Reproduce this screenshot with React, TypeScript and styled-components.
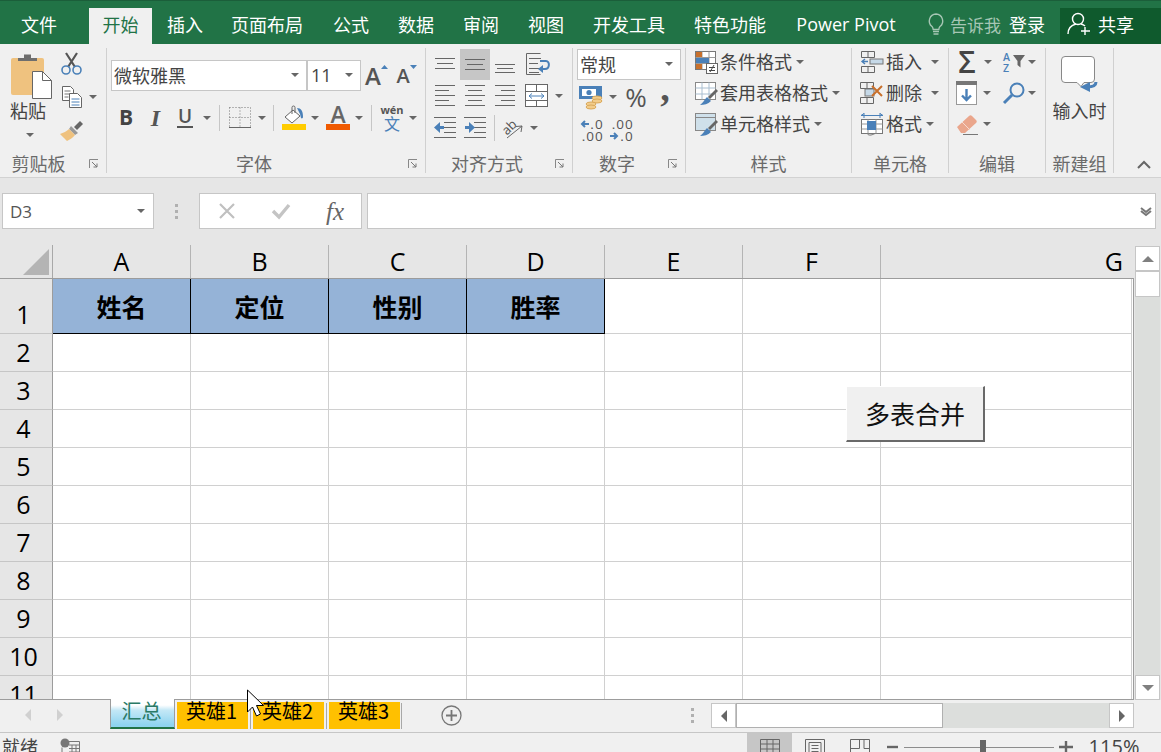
import React from "react";
import styled, { createGlobalStyle } from "styled-components";

const GRAY = "#666";
const BLUE = "#4a80b8";
const CJK = `"Noto Sans CJK SC", "Open Sans", sans-serif`;
const LATIN = `"Open Sans", "Noto Sans CJK SC", sans-serif`;

const Global = createGlobalStyle`
  html, body { margin: 0; padding: 0; width: 1161px; height: 752px; overflow: hidden; background: #f0f0f0; }
  * { box-sizing: border-box; }
  body { font-family: ${CJK}; color: #444; }
`;

const Page = styled.div`
  position: relative; width: 1161px; height: 752px; overflow: hidden;
  display: flex; flex-direction: column;
`;

/* ---------- title / tabs ---------- */
const TabBar = styled.div`
  height: 44px; flex: none; display: flex; align-items: flex-end;
  background: #217346; border-top: 1px solid #1b5e3a; color: #fff;
`;
const MenuTab = styled.div<{ $w: number; $active?: boolean; $ml?: number }>`
  width: ${(p) => p.$w}px; height: 36px; flex: none; margin-left: ${(p) => p.$ml ?? 0}px;
  display: flex; align-items: center; justify-content: center;
  font-size: 18px; line-height: 36px; padding-bottom: 4px; white-space: nowrap;
  background: ${(p) => (p.$active ? "#f0f0f0" : "transparent")};
  color: ${(p) => (p.$active ? "#217346" : "#fff")};
`;
const LatinTabText = styled.span`
  font-family: ${LATIN}; font-size: 18px;
`;
const TellArea = styled.div`
  height: 36px; flex: none; margin-left: 14px; display: flex; align-items: center; padding-bottom: 4px; gap: 6px;
`;
const TellText = styled.span`
  font-size: 17px; color: #a6c6b4; width: 52px; white-space: nowrap;
`;
const Login = styled.span`
  font-size: 18px; color: #fff; margin-left: 1px; width: 51px; white-space: nowrap;
`;
const Share = styled.div`
  flex: 1; height: 36px; background: #0f5a2d; display: flex; align-items: center; gap: 7px;
  padding: 0 0 4px 7px; font-size: 18px; color: #fff;
`;

/* ---------- ribbon ---------- */
const Ribbon = styled.div`
  height: 134px; flex: none; display: flex; padding: 4px 0; background: #f0f0f0;
  border-bottom: 1px solid #d2d2d2;
`;
const Group = styled.div<{ $w: number }>`
  width: ${(p) => p.$w}px; flex: none; display: flex; flex-direction: column;
  border-right: 1px solid #d0d0d0;
`;
const GroupBody = styled.div<{ $pt?: number }>`
  flex: 1; min-height: 0; padding-top: ${(p) => p.$pt ?? 1}px; display: flex; flex-direction: column;
`;
const LabelRow = styled.div`
  height: 22px; margin-bottom: -1px; display: flex; align-items: center; flex: none;
`;
const GroupLabel = styled.div<{ $pr?: number }>`
  flex: 1; text-align: center; font-size: 18px; line-height: 22px; color: #6a6a6a; padding-right: ${(p) => p.$pr ?? 0}px;
`;
const LauncherSlot = styled.div`
  width: 24px; flex: none; display: flex; justify-content: center; padding-top: 2px;
`;
const RRow = styled.div<{ $h?: number; $mt?: number; $pl?: number }>`
  height: ${(p) => p.$h ?? 31}px; flex: none; display: flex; align-items: center;
  margin-top: ${(p) => p.$mt ?? 0}px; padding-left: ${(p) => p.$pl ?? 0}px;
`;
const Slot = styled.div<{ $w: number; $active?: boolean }>`
  width: ${(p) => p.$w}px; height: 100%; flex: none; display: flex; align-items: center; justify-content: center;
  background: ${(p) => (p.$active ? "#c6c6c6" : "transparent")};
`;
const Caret = styled.i<{ $ml?: number }>`
  display: block; width: 0; height: 0; flex: none; margin-left: ${(p) => p.$ml ?? 0}px;
  border-left: 4px solid transparent; border-right: 4px solid transparent;
  border-top: 4px solid ${GRAY};
`;
const VSep = styled.div`
  width: 1px; height: 26px; background: #c6c6c6; flex: none;
`;
const SelectBox = styled.div<{ $w: number }>`
  width: ${(p) => p.$w}px; height: 31px; flex: none; background: #fff; border: 1px solid #c6c6c6;
  display: flex; align-items: center; justify-content: space-between; padding: 0 7px 2px 2px;
  font-size: 18px; color: #444; white-space: nowrap;
`;
const LatinValue = styled.span`
  font-family: ${LATIN}; font-size: 18px; margin-left: 1px;
`;
const GrowA = styled.span<{ $s: number }>`
  font-family: ${LATIN}; font-weight: 600; font-size: ${(p) => p.$s}px; color: #555; line-height: 1;
`;
const GrowTriWrap = styled.span`
  align-self: flex-start; margin: 5px 0 0 0; display: block;
`;
const FontBtn = styled.span`
  font-family: ${LATIN}; font-size: 21px; font-weight: 700; color: #444; line-height: 1;
`;
const ItalicBtn = styled.span`
  font-family: "Liberation Serif", serif; font-style: italic; font-size: 24px; font-weight: 700; color: #555; line-height: 1;
`;
const UnderBtn = styled.span`
  font-family: ${LATIN}; font-size: 19px; font-weight: 600; color: #555; line-height: 1; border-bottom: 2px solid #555; padding: 0 1px;
`;
const ColorStack = styled.div`
  display: flex; flex-direction: column; align-items: center; width: 24px;
`;
const ColorBar = styled.div<{ $c: string }>`
  width: 24px; height: 6px; background: ${(p) => p.$c}; flex: none;
`;
const ColorA = styled.span`
  font-family: ${LATIN}; font-weight: 600; font-size: 23px; color: #666; line-height: 18px; height: 19px;
`;
const WenStack = styled.div`
  display: flex; flex-direction: column; align-items: center; line-height: 1;
`;
const WenTop = styled.span`
  font-family: ${LATIN}; font-size: 11px; font-weight: 700; color: #555; line-height: 11px;
`;
const WenBottom = styled.span`
  font-size: 16px; color: ${BLUE}; line-height: 16px;
`;
const PercentText = styled.span`
  font-family: ${LATIN}; font-size: 26px; color: #555; line-height: 1;
`;
const CommaText = styled.span`
  font-family: "Liberation Serif", serif; font-size: 38px; font-weight: 700; color: #555; line-height: 1; margin-top: -17px;
`;
const DecStack = styled.div`
  display: flex; flex-direction: column; font-family: ${LATIN}; font-size: 13.5px; line-height: 12px; color: #555; letter-spacing: 1px; align-items: flex-end;
`;
const DecLine = styled.span`
  display: flex; align-items: center; gap: 1px;
`;
const Sigma = styled.span`
  font-family: ${LATIN}; font-size: 30px; font-weight: 600; color: #444; line-height: 1;
`;
const ListItemText = styled.span`
  font-size: 18px; color: #444; margin-left: 2px; white-space: nowrap; line-height: 24px; margin-bottom: 2px;
`;
const ColumnsBody = styled.div`
  flex: 1; min-height: 0; display: flex;
`;
const PasteCol = styled.div`
  width: 60px; flex: none; display: flex; flex-direction: column; align-items: flex-start; padding: 5px 0 0 11px;
`;
const PasteText = styled.span`
  font-size: 18px; color: #444; line-height: 22px; margin: 0 0 0 -1px;
`;
const PasteCaret = styled.div`
  margin: 12px 0 0 15px;
`;
const MiniCol = styled.div`
  flex: 1; display: flex; flex-direction: column;
`;
const NewBody = styled.div`
  flex: 1; display: flex; flex-direction: column; align-items: center; padding-top: 8px;
`;
const NewText = styled.span`
  font-size: 18px; color: #444; line-height: 22px; margin-top: 6px;
`;
const CollapseArea = styled.div`
  flex: 1; display: flex; align-items: flex-end; padding: 0 0 4px 23px;
`;

/* ---------- formula bar ---------- */
const FormulaBar = styled.div`
  height: 67px; flex: none; display: flex; background: #e6e6e6; padding: 15px 5px 16px 2px;
`;
const NameBox = styled.div`
  width: 152px; flex: none; background: #fff; border: 1px solid #c6c6c6; display: flex; align-items: center;
  justify-content: space-between; padding: 0 8px 0 7px; font-family: ${LATIN}; font-size: 17px; color: #555;
`;
const DotsSlot = styled.div`
  width: 45px; flex: none; display: flex; flex-direction: column; align-items: center; justify-content: center; gap: 3px;
`;
const Dot = styled.i`
  display: block; width: 3px; height: 3px; background: #b0b0b0;
`;
const FxBox = styled.div`
  width: 163px; flex: none; background: #fff; border: 1px solid #c6c6c6; display: flex; align-items: center; padding-left: 17px;
`;
const FxSlot = styled.div<{ $w: number }>`
  width: ${(p) => p.$w}px; flex: none; display: flex; justify-content: center;
`;
const FxText = styled.span`
  font-family: "Liberation Serif", serif; font-style: italic; font-weight: 400; font-size: 25px; color: #666; line-height: 1;
`;
const FormulaInput = styled.div`
  flex: 1; margin-left: 5px; background: #fff; border: 1px solid #c6c6c6; display: flex; align-items: center; justify-content: flex-end; padding-right: 3px;
`;

/* ---------- sheet ---------- */
const SheetArea = styled.div`
  height: 455px; flex: none; display: flex; background: #e6e6e6;
`;
const GridWrap = styled.div`
  position: relative; width: 1134px; flex: none; display: flex; flex-direction: column;
`;
const ColHeadRow = styled.div`
  height: 34px; flex: none; display: flex; border-bottom: 1px solid #9c9c9c;
`;
const Corner = styled.div`
  width: 53px; flex: none; border-right: 1px solid #a8a8a8; display: flex; align-items: flex-end; justify-content: flex-end; padding: 0 3px 3px 0;
`;
const ColHead = styled.div<{ $w: number; $last?: boolean }>`
  width: ${(p) => p.$w}px; flex: none; display: flex; align-items: center;
  justify-content: ${(p) => (p.$last ? "flex-end" : "center")}; padding-right: ${(p) => (p.$last ? 9 : 0)}px;
  border-right: 1px solid ${(p) => (p.$last ? "transparent" : "#b4b4b4")};
  font-family: ${LATIN}; font-size: 25px; line-height: 1; color: #000; padding-bottom: 1px;
`;
const GridBody = styled.div`
  flex: 1; min-height: 0; overflow: hidden; border-bottom: 1px solid #9c9c9c; border-right: 1px solid #9c9c9c; background: #fff;
`;
const SheetRow = styled.div<{ $h: number }>`
  height: ${(p) => p.$h}px; display: flex;
`;
const RowHead = styled.div<{ $first?: boolean }>`
  width: 53px; flex: none; background: #e6e6e6; border-right: 1px solid #9c9c9c; border-bottom: 1px solid #c6c6c6;
  display: flex; justify-content: center; align-items: ${(p) => (p.$first ? "flex-end" : "center")};
  font-family: ${LATIN}; font-size: 25px; line-height: 1; color: #000; padding: 0 5px ${(p) => (p.$first ? 6 : 1)}px 0;
`;
const Cell = styled.div<{ $w: number; $head?: boolean }>`
  width: ${(p) => p.$w}px; flex: none; display: flex; align-items: center; justify-content: center;
  background: ${(p) => (p.$head ? "#95b3d7" : "#fff")};
  border-right: 1px solid ${(p) => (p.$head ? "#000" : "#d0d0d0")};
  border-bottom: 1px solid ${(p) => (p.$head ? "#000" : "#d0d0d0")};
  font-size: 25px; font-weight: 700; color: #000; line-height: 1;
`;
const MergeButton = styled.div`
  position: absolute; left: 846px; top: 141px; width: 139px; height: 56px;
  background: #f0f0f0; border-right: 2px solid #696969; border-bottom: 2px solid #696969;
  border-top: 1px solid #fff; border-left: 1px solid #fff;
  display: flex; align-items: center; justify-content: center;
  font-size: 25px; color: #111; line-height: 1; padding-bottom: 1px;
`;
const VScroll = styled.div`
  flex: 1; display: flex; flex-direction: column; padding: 1px 1px 0 1px;
`;
const ScrollBtn = styled.div<{ $h?: number }>`
  height: ${(p) => p.$h ?? 25}px; flex: none; background: #fff; border: 1px solid #c6c6c6; display: flex; align-items: center; justify-content: center;
`;
const VTrack = styled.div`
  flex: 1; background: #dcdedc;
`;
const ArrowUp = styled.i`
  display: block; width: 0; height: 0; border-left: 6px solid transparent; border-right: 6px solid transparent; border-bottom: 6px solid #808080;
`;
const ArrowDown = styled.i`
  display: block; width: 0; height: 0; border-left: 6px solid transparent; border-right: 6px solid transparent; border-top: 6px solid #808080;
`;
const ArrowSide = styled.i<{ $right?: boolean; $c?: string }>`
  display: block; width: 0; height: 0; border-top: 6px solid transparent; border-bottom: 6px solid transparent;
  ${(p) => (p.$right ? `border-left: 6px solid ${p.$c ?? "#808080"};` : `border-right: 6px solid ${p.$c ?? "#808080"};`)}
`;

/* ---------- sheet tabs ---------- */
const TabStrip = styled.div`
  height: 32px; flex: none; display: flex; background: #f0f0f0; align-items: flex-start;
`;
const NavArea = styled.div`
  width: 110px; height: 32px; flex: none; display: flex; align-items: center; padding: 0 0 2px 25px; gap: 26px;
`;
const ActiveTab = styled.div`
  position: relative; width: 65px; height: 30px; margin-top: -1px; flex: none;
  background: linear-gradient(#fff 0, #fff 22%, #c4e8f6 40%, #8fd4f0 92%);
  border-left: 1px solid #9c9c9c; border-right: 1px solid #9c9c9c; border-bottom: 2px solid #217346;
  display: flex; align-items: center; justify-content: center; font-size: 20px; color: #2a7a66; line-height: 1; padding: 0 2px 5px 0;
`;
const SheetTab = styled.div<{ $w: number; $ml: number }>`
  width: ${(p) => p.$w}px; height: 27px; margin: 2px 0 0 ${(p) => p.$ml}px; flex: none; background: #ffc000;
  display: flex; align-items: center; justify-content: center; font-size: 20px; color: #000; line-height: 1; padding: 0 2px 9px 0;
`;
const TabSep = styled.div<{ $ml: number }>`
  width: 1px; height: 26px; margin: 3px 0 0 ${(p) => p.$ml}px; background: #a8a8a8; flex: none;
`;
const AddSheet = styled.div`
  margin: 5px 0 0 39px; width: 21px; flex: none;
`;
const HDots = styled.div`
  margin: 0 0 0 229px; width: 3px; height: 30px; flex: none; display: flex; flex-direction: column; justify-content: center; gap: 3px;
`;
const HScroll = styled.div`
  margin: 3px 0 0 17px; width: 423px; height: 25px; flex: none; display: flex; background: #dcdedc;
`;
const HBtn = styled.div`
  width: 25px; flex: none; background: #fff; border: 1px solid #c6c6c6; display: flex; align-items: center; justify-content: center;
`;
const HThumb = styled.div`
  width: 207px; flex: none; background: #fff; border: 1px solid #b0b0b0;
`;
const HTrack = styled.div`
  flex: 1;
`;

/* ---------- status bar ---------- */
const StatusBar = styled.div`
  flex: 1; min-height: 0; display: flex; justify-content: space-between; background: #f0f0f0; border-top: 1px solid #c6c6c6; overflow: hidden;
`;
const StatusLeft = styled.div`
  display: flex; align-items: flex-start; padding: 1px 0 0 2px; gap: 22px;
`;
const StatusText = styled.span`
  font-size: 18px; line-height: 24px; color: #444; width: 36px;
`;
const MacroSlot = styled.div`
  padding-top: 4px;
`;
const StatusRight = styled.div`
  width: 414px; flex: none; display: flex; align-items: stretch;
`;
const ViewBtn = styled.div<{ $active?: boolean }>`
  width: 45px; flex: none; display: flex; justify-content: center; padding-top: 6px;
  background: ${(p) => (p.$active ? "#c6c6c6" : "transparent")};
`;
const ZoomSlot = styled.div<{ $w: number }>`
  width: ${(p) => p.$w}px; flex: none; display: flex; justify-content: center; padding-top: 8px;
`;
const ZoomTrack = styled.div`
  position: relative; width: 150px; flex: none;
  &::before { content: ""; position: absolute; left: 0; right: 0; top: 14px; height: 1px; background: #8c8c8c; }
`;
const ZoomThumb = styled.div`
  position: absolute; left: 76px; top: 7px; width: 6px; height: 14px; background: #666;
`;
const ZoomText = styled.div`
  width: 72px; flex: none; text-align: center; font-family: ${LATIN}; font-size: 20px; line-height: 28px; color: #444;
`;
const CursorBox = styled.div`
  position: absolute; left: 246px; top: 689px; width: 20px; height: 30px; pointer-events: none;
`;

/* ---------- icons ---------- */
type SvgProps = { children: React.ReactNode; w: number; h: number };
const Ico = ({ w, h, children }: SvgProps) => (
  <svg width={w} height={h} viewBox={`0 0 ${w} ${h}`} fill="none" style={{ display: "block", flex: "none", overflow: "visible" }}>
    {children}
  </svg>
);

const Launcher = () => (
  <Ico w={10} h={10}>
    <path d="M.5 9V.5H9" stroke="#888" />
    <path d="M3 3l5 5M8 4.500V8H4.500" stroke="#777" />
  </Ico>
);
const PasteIcon = () => (
  <Ico w={42} h={46}>
    <rect x="0" y="5" width="33" height="37" rx="2" fill="#efc27f" />
    <path d="M7 8V5h6V1.500h7V5h6v3z" fill="#6e6e6e" />
    <path d="M21.500 18.500h10l9 9v18h-19z" fill="#fff" stroke="#666" />
    <path d="M31.500 18.500v9h9" stroke="#666" />
  </Ico>
);
const Scissors = () => (
  <Ico w={21} h={23}>
    <path d="M5 1l9 14M16 1L7 15" stroke="#555" strokeWidth="2.2" />
    <circle cx="5" cy="18" r="4" stroke={BLUE} strokeWidth="1.6" />
    <circle cx="16" cy="18" r="4" stroke={BLUE} strokeWidth="1.6" />
  </Ico>
);
const CopyIcon = () => (
  <Ico w={20} h={22}>
    <path d="M.5.5h8l3 3v11h-11z" fill="#fff" stroke="#666" />
    <path d="M2.500 5h6M2.500 8h6M2.500 11h4" stroke="#777" />
    <path d="M7.500 7.500h8l4 4v10h-12z" fill="#fff" stroke="#666" />
    <path d="M9.500 13h8M9.500 16h8M9.500 19h8" stroke={BLUE} />
  </Ico>
);
const BrushIcon = () => (
  <Ico w={24} h={21}>
    <path d="M14 7l6-6 3 3-6 6z" fill="#666" />
    <path d="M11 6l7 7-3 2-6-6z" fill="#999" />
    <path d="M9 9l6 6c-2 3-6 5-8 6l-7-7c3-1 7-3 9-5z" fill="#efc27f" />
  </Ico>
);
const GrowTri = ({ up }: { up?: boolean }) => (
  <Ico w={7} h={4}>
    <path d={up ? "M0 4l3.500-4L7 4z" : "M0 0l3.500 4L7 0z"} fill={BLUE} />
  </Ico>
);
const BorderIcon = () => (
  <Ico w={22} h={21}>
    <path d="M.5.5h21M.5.5v20M21.500.5v20M11 .5v20M.5 10.500h21" stroke="#777" strokeDasharray="1 2" />
    <path d="M0 20.500h22" stroke="#666" />
  </Ico>
);
const BucketIcon = () => (
  <Ico w={24} h={19}>
    <path d="M11 5L3 12l7 6 8-7z" fill="#fff" stroke="#666" />
    <path d="M10 9V2.500a1.500 1.500 0 0 1 3 0V8" stroke="#666" />
    <path d="M15 3c4 0 6 3 6 9 0 1-1 2-2 1l-1-4z" fill={BLUE} />
  </Ico>
);
const Lines = ({ w, h, l, c = "#666" }: { w: number; h: number; l: [number, number, number][]; c?: string }) => (
  <Ico w={w} h={h}>
    {l.map(([a, b, y], i) => (
      <path key={i} d={`M${a} ${y}.5H${b}`} stroke={c} />
    ))}
  </Ico>
);
const WrapIcon = () => (
  <Ico w={24} h={23}>
    <path d="M.5.5h14M.5.5v21h14" stroke="#666" />
    <path d="M3 5.500h12M3 10.500h9M3 15.500h10M3 19.500h10" stroke="#666" />
    <path d="M14 8h6c4 0 4 8-1 8h-4" stroke={BLUE} strokeWidth="2" />
    <path d="M17 12l-5 4 5 4z" fill={BLUE} />
  </Ico>
);
const MergeIcon = () => (
  <Ico w={24} h={24}>
    <rect x=".5" y=".5" width="22" height="22" fill="#fff" stroke="#666" />
    <path d="M.5 7.500h22M.5 16.500h22M11.500 .5v7M11.500 16.500v6" stroke="#666" />
    <path d="M4 12h15M4 12l3-2.500M4 12l3 2.500M19 12l-3-2.500M19 12l-3 2.500" stroke={BLUE} />
  </Ico>
);
const IndentIcon = ({ right }: { right?: boolean }) => (
  <Ico w={23} h={22}>
    <path d="M0 .5h22M10 5.500h12M10 10.500h12M10 15.500h12M0 20.500h22" stroke="#666" />
    {right ? (
      <path d="M1 9h4V5l6 5.500-6 5.500v-4H1z" fill={BLUE} />
    ) : (
      <path d="M10 9H6V5L0 10.500 6 16v-4h4z" fill={BLUE} />
    )}
  </Ico>
);
const OrientIcon = () => (
  <Ico w={22} h={22}>
    <text x="1" y="15" fontFamily="Open Sans, sans-serif" fontSize="13" fill="#555" transform="rotate(-45 8 11)">ab</text>
    <path d="M6 21L21 9M21 9l-6 .5M21 9l-1 6" stroke="#666" />
  </Ico>
);
const MoneyIcon = () => (
  <Ico w={24} h={24}>
    <rect x="0" y="1" width="23" height="13" fill={BLUE} />
    <rect x="3" y="4" width="14" height="7" fill="#fff" />
    <circle cx="10" cy="7.500" r="2.600" fill={BLUE} />
    <ellipse cx="18" cy="13" rx="5" ry="2" fill="#f2cc8a" stroke="#d9a85a" />
    <ellipse cx="18" cy="16" rx="5" ry="2" fill="#f2cc8a" stroke="#d9a85a" />
    <ellipse cx="12" cy="19" rx="5" ry="2" fill="#f2cc8a" stroke="#d9a85a" />
    <ellipse cx="12" cy="22" rx="5" ry="2" fill="#f2cc8a" stroke="#d9a85a" />
  </Ico>
);
const DecArrow = ({ right }: { right?: boolean }) => (
  <Ico w={9} h={8}>
    {right ? (
      <path d="M0 4h7M4 1l3 3-3 3" stroke={BLUE} strokeWidth="2" />
    ) : (
      <path d="M9 4H2M5 1L2 4l3 3" stroke={BLUE} strokeWidth="2" />
    )}
  </Ico>
);
const CondIcon = () => (
  <Ico w={23} h={23}>
    <rect x=".5" y=".5" width="20" height="18" fill="#fff" stroke="#777" />
    <path d="M7 .5v18M14 .5v18M.5 6.500h20M.5 12.500h20" stroke="#999" />
    <rect x="1" y="1" width="6" height="5" fill="#c8702c" />
    <rect x="1" y="7" width="13" height="5" fill={BLUE} />
    <rect x="1" y="13" width="6" height="5" fill="#c8702c" />
    <rect x="11.500" y="12.500" width="11" height="10" fill="#fff" stroke="#666" />
    <path d="M14 16.500h6M14 19.500h6M19 14l-4 7" stroke="#444" />
  </Ico>
);
const TableBrushIcon = ({ fill }: { fill?: boolean }) => (
  <Ico w={23} h={23}>
    <rect x=".5" y=".5" width="20" height="17" fill={fill ? "#cfe0ea" : "#fff"} stroke="#888" />
    {fill ? (
      <path d="M.5 4.500h20" stroke="#888" />
    ) : (
      <path d="M7 .5v17M14 .5v17M.5 6h20M.5 12h20" stroke="#a9bed0" />
    )}
    <path d="M13 15l8-8 2 2-8 8z" fill="#666" />
    <path d="M12 15l4 4c-3 3-7 4-11 4 3-2 4-5 7-8z" fill={BLUE} />
  </Ico>
);
const CellInsertIcon = () => (
  <Ico w={23} h={22}>
    <path d="M.5 .5h13v6H.5zM.5 15.500h13v6H.5zM7 .5v6M7 15.500v6" stroke="#666" />
    <rect x="9" y="8" width="13" height="5" fill="#c6d9e8" stroke="#777" />
    <path d="M7 10.500H1M4 8l-3 2.500L4 13" stroke={BLUE} strokeWidth="1.4" />
  </Ico>
);
const CellDeleteIcon = () => (
  <Ico w={24} h={22}>
    <path d="M.5 .5h13v6H.5zM.5 15.500h13v6H.5zM7 .5v6M7 15.500v6" stroke="#666" />
    <rect x="5" y="7" width="9" height="7" fill="#c6d9e8" stroke="#777" />
    <path d="M12 4l10 10M22 4L12 14" stroke="#c8702c" strokeWidth="2" />
  </Ico>
);
const CellFormatIcon = () => (
  <Ico w={23} h={24}>
    <path d="M0 3.500h22M3 1v5M19 1v5M0 3.500l3-2M22 3.500l-3-2" stroke={BLUE} />
    <rect x=".5" y="7.500" width="21" height="14" fill="#fff" stroke="#777" />
    <path d="M7 7.500v14M15 7.500v14M.5 12h21M.5 17h21" stroke="#999" />
    <rect x="6" y="9" width="9" height="9" fill={BLUE} />
    <path d="M6 21.500c2 3 6 1 8 0" stroke="#777" />
  </Ico>
);
const SortIcon = () => (
  <Ico w={22} h={21}>
    <text x="0" y="9" fontFamily="Open Sans, sans-serif" fontSize="10.5" fontWeight="600" fill={BLUE}>A</text>
    <text x="0" y="20" fontFamily="Open Sans, sans-serif" fontSize="10.5" fontWeight="600" fill={BLUE}>Z</text>
    <path d="M10 3h12l-4.500 6v6.500L14.500 13V9z" fill="#666" />
  </Ico>
);
const FillIcon = () => (
  <Ico w={22} h={24}>
    <rect x=".5" y=".5" width="20" height="23" fill="#fff" stroke="#999" />
    <rect x="0" y="0" width="21" height="4" fill="#777" />
    <path d="M10.500 8v11M6 14.500l4.500 4.500 4.500-4.500" stroke={BLUE} strokeWidth="2.4" />
  </Ico>
);
const FindIcon = () => (
  <Ico w={23} h={22}>
    <circle cx="14" cy="8" r="6.500" stroke={BLUE} strokeWidth="2" />
    <path d="M9 13l-8 8" stroke={BLUE} strokeWidth="3" />
  </Ico>
);
const EraserIcon = () => (
  <Ico w={22} h={21}>
    <path d="M1 13L13 2c1-1 2-1 3 0l4 4c1 1 1 2 0 3L9 19H5z" fill="#eaa68c" />
    <path d="M6 8l8 8" stroke="#f7d9ce" />
    <path d="M7 20.500h15" stroke="#777" />
  </Ico>
);
const BubbleIcon = () => (
  <Ico w={38} h={37}>
    <path d="M4 .5h26a3.500 3.500 0 0 1 3.500 3.500v19a3.500 3.500 0 0 1-3.500 3.500h-7l-3 4-4-4H4A3.500 3.500 0 0 1 .5 23V4A3.500 3.500 0 0 1 4 .5z" fill="#fff" stroke="#888" />
    <path d="M35 26c0 4-4 5-9 5" stroke={BLUE} strokeWidth="3" />
    <path d="M29 26l-10 5 10 5z" fill={BLUE} />
  </Ico>
);
const Chevron = () => (
  <Ico w={14} h={9}>
    <path d="M1 8l6-6 6 6" stroke="#666" strokeWidth="2" />
  </Ico>
);
const Bulb = () => (
  <Ico w={16} h={23}>
    <path d="M8 1a7 7 0 0 0-4 12.500c1 1 1 2 1.200 3h5.600c.2-1 .2-2 1.200-3A7 7 0 0 0 8 1z" stroke="#a6c6b4" strokeWidth="1.4" />
    <path d="M5 18.500h6M5.500 21h5" stroke="#a6c6b4" strokeWidth="1.6" />
  </Ico>
);
const UserPlus = () => (
  <Ico w={24} h={24}>
    <circle cx="11" cy="7" r="5.500" stroke="#fff" strokeWidth="1.4" />
    <path d="M1 22c0-6 4-9 8-10M14 12c2 .5 3 1 4 2" stroke="#fff" strokeWidth="1.4" />
    <path d="M18 15v8M14 19h9" stroke="#fff" strokeWidth="1.4" />
  </Ico>
);
const XIcon = () => (
  <Ico w={18} h={16}>
    <path d="M2 1l14 14M16 1L2 15" stroke="#c0c0c0" strokeWidth="2.2" />
  </Ico>
);
const CheckIcon = () => (
  <Ico w={20} h={16}>
    <path d="M2 8l6 6L18 2" stroke="#c4c4c4" strokeWidth="3.4" />
  </Ico>
);
const DoubleDown = () => (
  <Ico w={12} h={9}>
    <path d="M1 1l5 4 5-4M1 4l5 4 5-4" stroke="#777" strokeWidth="2" />
  </Ico>
);
const CornerTri = () => (
  <Ico w={26} h={26}>
    <path d="M26 0v26H0z" fill="#b4b4b4" />
  </Ico>
);
const AddCircle = () => (
  <Ico w={21} h={21}>
    <circle cx="10.500" cy="10.500" r="9.500" stroke="#777" strokeWidth="1.3" />
    <path d="M10.500 5v11M5 10.500h11" stroke="#777" strokeWidth="1.8" />
  </Ico>
);
const MacroIcon = () => (
  <Ico w={20} h={16}>
    <circle cx="5" cy="5" r="4.500" fill="#777" />
    <path d="M6 3.500h13.500v13M2 9.500v7M9 7h10M9 10.500h10M9 14h10M12 7v9M16 7v9" stroke="#777" />
  </Ico>
);
const NormalView = () => (
  <Ico w={20} h={14}>
    <path d="M.5.5h19v14M.5.5v14M.5 5h19M.5 10h19M7 .5v14M13 .5v14" stroke="#666" />
  </Ico>
);
const PageView = () => (
  <Ico w={20} h={14}>
    <path d="M.5 14V.5h19V14M4 14V3.500h12V14M6.500 6.500h7M6.500 9.500h7M6.500 12.500h7" stroke="#666" />
  </Ico>
);
const BreakView = () => (
  <Ico w={20} h={14}>
    <path d="M.5 14V.5h19V14M.5 9.500h9M9.500.5v9M14 .5v9h5.500" stroke="#666" />
  </Ico>
);
const MinusIcon = () => (
  <Ico w={12} h={12}>
    <path d="M0 6h11" stroke="#666" strokeWidth="2.4" />
  </Ico>
);
const PlusIcon = () => (
  <Ico w={14} h={12}>
    <path d="M0 6h14M7 0v13" stroke="#666" strokeWidth="2.4" />
  </Ico>
);
const Cursor = () => (
  <Ico w={20} h={30}>
    <path d="M1.500 1v22l5-5 4 9 4-2-4-8.500h7z" fill="#fff" stroke="#000" strokeWidth="1" />
  </Ico>
);

/* ---------- data ---------- */
const MENU: [string, number][] = [
  ["文件", 78],
  ["开始", 63],
  ["插入", 66],
  ["页面布局", 98],
  ["公式", 70],
  ["数据", 60],
  ["审阅", 70],
  ["视图", 60],
  ["开发工具", 106],
  ["特色功能", 96],
];
const COLS: [string, number][] = [
  ["A", 138],
  ["B", 138],
  ["C", 138],
  ["D", 138],
  ["E", 138],
  ["F", 138],
  ["G", 252],
];
const HEADS = ["姓名", "定位", "性别", "胜率", "", "", ""];
const ROWS = [2, 3, 4, 5, 6, 7, 8, 9, 10, 11];

const lines3 = (a: number, b: number, y: number, gap: number): [number, number, number][] => [
  [a, b, y],
  [a + 2, b - 2, y + gap],
  [a, b, y + gap * 2],
];

export default function App() {
  return (
    <Page>
      <Global />
      <TabBar>
        {MENU.map(([t, w], i) => (
          <MenuTab key={t} $w={w} $active={i === 1} $ml={i === 1 ? 11 : 0}>
            {t}
          </MenuTab>
        ))}
        <MenuTab $w={136}>
          <LatinTabText>Power Pivot</LatinTabText>
        </MenuTab>
        <TellArea>
          <Bulb />
          <TellText>告诉我</TellText>
          <Login>登录</Login>
        </TellArea>
        <Share>
          <UserPlus />
          共享
        </Share>
      </TabBar>

      <Ribbon>
        <Group $w={107}>
          <ColumnsBody>
            <PasteCol>
              <PasteIcon />
              <PasteText>粘贴</PasteText>
              <PasteCaret>
                <Caret />
              </PasteCaret>
            </PasteCol>
            <MiniCol>
              <RRow $h={31}>
                <Slot $w={22}><Scissors /></Slot>
              </RRow>
              <RRow $h={36}>
                <Slot $w={24}><CopyIcon /></Slot>
                <Slot $w={18}><Caret /></Slot>
              </RRow>
              <RRow $h={31}>
                <Slot $w={24}><BrushIcon /></Slot>
              </RRow>
            </MiniCol>
          </ColumnsBody>
          <LabelRow>
            <GroupLabel $pr={5}>剪贴板</GroupLabel>
            <LauncherSlot><Launcher /></LauncherSlot>
          </LabelRow>
        </Group>

        <Group $w={319}>
          <GroupBody $pt={12}>
            <RRow $pl={4}>
              <SelectBox $w={196}>
                微软雅黑
                <Caret />
              </SelectBox>
              <SelectBox $w={54}>
                <LatinValue>11</LatinValue>
                <Caret />
              </SelectBox>
              <Slot $w={31}>
                <GrowA $s={24}>A</GrowA>
                <GrowTriWrap><GrowTri up /></GrowTriWrap>
              </Slot>
              <Slot $w={29}>
                <GrowA $s={20}>A</GrowA>
                <GrowTriWrap><GrowTri /></GrowTriWrap>
              </Slot>
            </RRow>
            <RRow $mt={11} $pl={4}>
              <Slot $w={30}><FontBtn>B</FontBtn></Slot>
              <Slot $w={29}><ItalicBtn>I</ItalicBtn></Slot>
              <Slot $w={30}><UnderBtn>U</UnderBtn></Slot>
              <Slot $w={14}><Caret /></Slot>
              <Slot $w={5} />
              <VSep />
              <Slot $w={2} />
              <Slot $w={35}><BorderIcon /></Slot>
              <Slot $w={10}><Caret /></Slot>
              <Slot $w={6} />
              <VSep />
              <Slot $w={4} />
              <Slot $w={32}>
                <ColorStack>
                  <BucketIcon />
                  <ColorBar $c="#ffcc00" />
                </ColorStack>
              </Slot>
              <Slot $w={10}><Caret /></Slot>
              <Slot $w={2} />
              <Slot $w={32}>
                <ColorStack>
                  <ColorA>A</ColorA>
                  <ColorBar $c="#f05a00" />
                </ColorStack>
              </Slot>
              <Slot $w={10}><Caret /></Slot>
              <Slot $w={7} />
              <VSep />
              <Slot $w={4} />
              <Slot $w={32}>
                <WenStack>
                  <WenTop>wén</WenTop>
                  <WenBottom>文</WenBottom>
                </WenStack>
              </Slot>
              <Slot $w={10}><Caret /></Slot>
            </RRow>
          </GroupBody>
          <LabelRow>
            <GroupLabel>字体</GroupLabel>
            <LauncherSlot><Launcher /></LauncherSlot>
          </LabelRow>
        </Group>

        <Group $w={147}>
          <GroupBody>
            <RRow $pl={4}>
              <Slot $w={30}><Lines w={20} h={15} l={lines3(0, 20, 1, 5)} /></Slot>
              <Slot $w={30} $active><Lines w={20} h={15} l={lines3(0, 20, 2, 5)} /></Slot>
              <Slot $w={30}><Lines w={20} h={21} l={lines3(0, 20, 10, 4)} /></Slot>
              <Slot $w={36}><WrapIcon /></Slot>
            </RRow>
            <RRow $pl={4}>
              <Slot $w={30}>
                <Lines w={20} h={21} l={[[0, 20, 0], [0, 14, 5], [0, 20, 10], [0, 14, 15], [0, 20, 20]]} />
              </Slot>
              <Slot $w={30}>
                <Lines w={20} h={21} l={[[0, 20, 0], [3, 17, 5], [0, 20, 10], [3, 17, 15], [0, 20, 20]]} />
              </Slot>
              <Slot $w={30}>
                <Lines w={20} h={21} l={[[0, 20, 0], [6, 20, 5], [0, 20, 10], [6, 20, 15], [0, 20, 20]]} />
              </Slot>
              <Slot $w={34}><MergeIcon /></Slot>
              <Slot $w={10}><Caret /></Slot>
            </RRow>
            <RRow $pl={4} $mt={1}>
              <Slot $w={30}><IndentIcon /></Slot>
              <Slot $w={30}><IndentIcon right /></Slot>
              <Slot $w={4} />
              <VSep />
              <Slot $w={34}><OrientIcon /></Slot>
              <Slot $w={10}><Caret /></Slot>
            </RRow>
          </GroupBody>
          <LabelRow>
            <GroupLabel>对齐方式</GroupLabel>
            <LauncherSlot><Launcher /></LauncherSlot>
          </LabelRow>
        </Group>

        <Group $w={113}>
          <GroupBody>
            <RRow $pl={4}>
              <SelectBox $w={104}>
                常规
                <Caret />
              </SelectBox>
            </RRow>
            <RRow $pl={2} $mt={1}>
              <Slot $w={32}><MoneyIcon /></Slot>
              <Slot $w={12}><Caret /></Slot>
              <Slot $w={34}><PercentText>%</PercentText></Slot>
              <Slot $w={24}><CommaText>,</CommaText></Slot>
            </RRow>
            <RRow $pl={4} $mt={2}>
              <Slot $w={30}>
                <DecStack>
                  <DecLine><DecArrow />.0</DecLine>
                  <DecLine>.00</DecLine>
                </DecStack>
              </Slot>
              <Slot $w={30}>
                <DecStack>
                  <DecLine>.00</DecLine>
                  <DecLine><DecArrow right />.0</DecLine>
                </DecStack>
              </Slot>
            </RRow>
          </GroupBody>
          <LabelRow>
            <GroupLabel>数字</GroupLabel>
            <LauncherSlot><Launcher /></LauncherSlot>
          </LabelRow>
        </Group>

        <Group $w={166}>
          <GroupBody $pt={0}>
            <RRow $pl={8} $h={28}>
              <Slot $w={24}><CondIcon /></Slot>
              <ListItemText>条件格式</ListItemText>
              <Caret $ml={4} />
            </RRow>
            <RRow $pl={8} $h={34}>
              <Slot $w={24}><TableBrushIcon /></Slot>
              <ListItemText>套用表格格式</ListItemText>
              <Caret $ml={4} />
            </RRow>
            <RRow $pl={8} $h={28}>
              <Slot $w={24}><TableBrushIcon fill /></Slot>
              <ListItemText>单元格样式</ListItemText>
              <Caret $ml={4} />
            </RRow>
          </GroupBody>
          <LabelRow><GroupLabel>样式</GroupLabel></LabelRow>
        </Group>

        <Group $w={97}>
          <GroupBody $pt={0}>
            <RRow $pl={8} $h={28}>
              <Slot $w={24}><CellInsertIcon /></Slot>
              <ListItemText>插入</ListItemText>
              <Caret $ml={9} />
            </RRow>
            <RRow $pl={8} $h={34}>
              <Slot $w={24}><CellDeleteIcon /></Slot>
              <ListItemText>删除</ListItemText>
              <Caret $ml={9} />
            </RRow>
            <RRow $pl={8} $h={28}>
              <Slot $w={24}><CellFormatIcon /></Slot>
              <ListItemText>格式</ListItemText>
              <Caret $ml={4} />
            </RRow>
          </GroupBody>
          <LabelRow><GroupLabel>单元格</GroupLabel></LabelRow>
        </Group>

        <Group $w={97}>
          <GroupBody $pt={0}>
            <RRow $pl={4} $h={28}>
              <Slot $w={28}><Sigma>Σ</Sigma></Slot>
              <Slot $w={14}><Caret /></Slot>
              <Slot $w={7} />
              <Slot $w={24}><SortIcon /></Slot>
              <Slot $w={12}><Caret /></Slot>
            </RRow>
            <RRow $pl={4} $h={34}>
              <Slot $w={28}><FillIcon /></Slot>
              <Slot $w={12}><Caret /></Slot>
              <Slot $w={9} />
              <Slot $w={24}><FindIcon /></Slot>
              <Slot $w={12}><Caret /></Slot>
            </RRow>
            <RRow $pl={4} $h={28}>
              <Slot $w={28}><EraserIcon /></Slot>
              <Slot $w={12}><Caret /></Slot>
            </RRow>
          </GroupBody>
          <LabelRow><GroupLabel>编辑</GroupLabel></LabelRow>
        </Group>

        <Group $w={68}>
          <NewBody>
            <BubbleIcon />
            <NewText>输入时</NewText>
          </NewBody>
          <LabelRow><GroupLabel>新建组</GroupLabel></LabelRow>
        </Group>

        <CollapseArea><Chevron /></CollapseArea>
      </Ribbon>

      <FormulaBar>
        <NameBox>
          D3
          <Caret />
        </NameBox>
        <DotsSlot>
          <Dot />
          <Dot />
          <Dot />
        </DotsSlot>
        <FxBox>
          <FxSlot $w={20}><XIcon /></FxSlot>
          <FxSlot $w={88}><CheckIcon /></FxSlot>
          <FxSlot $w={20}><FxText>fx</FxText></FxSlot>
        </FxBox>
        <FormulaInput><DoubleDown /></FormulaInput>
      </FormulaBar>

      <SheetArea>
        <GridWrap>
          <ColHeadRow>
            <Corner><CornerTri /></Corner>
            {COLS.map(([c, w], i) => (
              <ColHead key={c} $w={w} $last={i === COLS.length - 1}>{c}</ColHead>
            ))}
          </ColHeadRow>
          <GridBody>
            <SheetRow $h={55}>
              <RowHead $first>1</RowHead>
              {COLS.map(([c, w], i) => (
                <Cell key={c} $w={i === 6 ? w - 1 : w} $head={i < 4}>{HEADS[i]}</Cell>
              ))}
            </SheetRow>
            {ROWS.map((r) => (
              <SheetRow key={r} $h={38}>
                <RowHead>{r}</RowHead>
                {COLS.map(([c, w], i) => (
                  <Cell key={c} $w={i === 6 ? w - 1 : w} />
                ))}
              </SheetRow>
            ))}
          </GridBody>
          <MergeButton>多表合并</MergeButton>
        </GridWrap>
        <VScroll>
          <ScrollBtn><ArrowUp /></ScrollBtn>
          <ScrollBtn $h={26} />
          <VTrack />
          <ScrollBtn><ArrowDown /></ScrollBtn>
        </VScroll>
      </SheetArea>

      <TabStrip>
        <NavArea>
          <ArrowSide $c="#d0d0d0" />
          <ArrowSide $right $c="#d0d0d0" />
        </NavArea>
        <ActiveTab>汇总</ActiveTab>
        <SheetTab $w={71} $ml={2}>英雄1</SheetTab>
        <TabSep $ml={2} />
        <SheetTab $w={71} $ml={2}>英雄2</SheetTab>
        <TabSep $ml={2} />
        <SheetTab $w={71} $ml={2}>英雄3</SheetTab>
        <TabSep $ml={1} />
        <AddSheet><AddCircle /></AddSheet>
        <HDots>
          <Dot />
          <Dot />
          <Dot />
        </HDots>
        <HScroll>
          <HBtn><ArrowSide $c="#666" /></HBtn>
          <HThumb />
          <HTrack />
          <HBtn><ArrowSide $right $c="#666" /></HBtn>
        </HScroll>
      </TabStrip>

      <StatusBar>
        <StatusLeft>
          <StatusText>就绪</StatusText>
          <MacroSlot><MacroIcon /></MacroSlot>
        </StatusLeft>
        <StatusRight>
          <ViewBtn $active><NormalView /></ViewBtn>
          <ViewBtn><PageView /></ViewBtn>
          <ViewBtn><BreakView /></ViewBtn>
          <ZoomSlot $w={22}><MinusIcon /></ZoomSlot>
          <ZoomTrack><ZoomThumb /></ZoomTrack>
          <ZoomSlot $w={24}><PlusIcon /></ZoomSlot>
          <ZoomText>115%</ZoomText>
        </StatusRight>
      </StatusBar>

      <CursorBox><Cursor /></CursorBox>
    </Page>
  );
}
